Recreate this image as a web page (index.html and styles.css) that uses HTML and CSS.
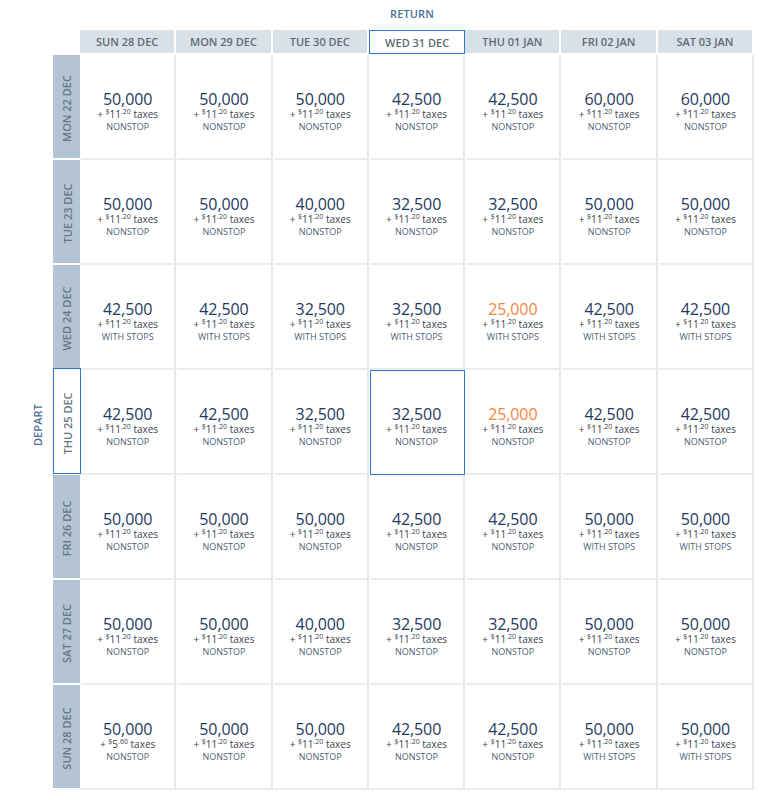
FILE: index.html
```html
<!DOCTYPE html>
<html>
<head>
<meta charset="utf-8">
<link rel="stylesheet" href="styles.css">
</head>
<body>
<div class="page">
  <div class="return-row"><span class="axis-label">RETURN</span></div>
  <div class="layout">
    <div class="depart-col"><span class="axis-label depart">DEPART</span></div>
    <div class="grid">
      <div class="corner"></div>
      <div class="hcell">SUN 28 DEC</div>
      <div class="hcell">MON 29 DEC</div>
      <div class="hcell">TUE 30 DEC</div>
      <div class="hcell sel">WED 31 DEC</div>
      <div class="hcell">THU 01 JAN</div>
      <div class="hcell">FRI 02 JAN</div>
      <div class="hcell">SAT 03 JAN</div>

      <div class="rlabel"><span>MON 22 DEC</span></div>
      <div class="cell"><div class="price">50,000</div><div class="tax">+ <sup>$</sup>11<sup>.20</sup> taxes</div><div class="stop">NONSTOP</div></div>
      <div class="cell"><div class="price">50,000</div><div class="tax">+ <sup>$</sup>11<sup>.20</sup> taxes</div><div class="stop">NONSTOP</div></div>
      <div class="cell"><div class="price">50,000</div><div class="tax">+ <sup>$</sup>11<sup>.20</sup> taxes</div><div class="stop">NONSTOP</div></div>
      <div class="cell"><div class="price">42,500</div><div class="tax">+ <sup>$</sup>11<sup>.20</sup> taxes</div><div class="stop">NONSTOP</div></div>
      <div class="cell"><div class="price">42,500</div><div class="tax">+ <sup>$</sup>11<sup>.20</sup> taxes</div><div class="stop">NONSTOP</div></div>
      <div class="cell"><div class="price">60,000</div><div class="tax">+ <sup>$</sup>11<sup>.20</sup> taxes</div><div class="stop">NONSTOP</div></div>
      <div class="cell"><div class="price">60,000</div><div class="tax">+ <sup>$</sup>11<sup>.20</sup> taxes</div><div class="stop">NONSTOP</div></div>

      <div class="rlabel"><span>TUE 23 DEC</span></div>
      <div class="cell"><div class="price">50,000</div><div class="tax">+ <sup>$</sup>11<sup>.20</sup> taxes</div><div class="stop">NONSTOP</div></div>
      <div class="cell"><div class="price">50,000</div><div class="tax">+ <sup>$</sup>11<sup>.20</sup> taxes</div><div class="stop">NONSTOP</div></div>
      <div class="cell"><div class="price">40,000</div><div class="tax">+ <sup>$</sup>11<sup>.20</sup> taxes</div><div class="stop">NONSTOP</div></div>
      <div class="cell"><div class="price">32,500</div><div class="tax">+ <sup>$</sup>11<sup>.20</sup> taxes</div><div class="stop">NONSTOP</div></div>
      <div class="cell"><div class="price">32,500</div><div class="tax">+ <sup>$</sup>11<sup>.20</sup> taxes</div><div class="stop">NONSTOP</div></div>
      <div class="cell"><div class="price">50,000</div><div class="tax">+ <sup>$</sup>11<sup>.20</sup> taxes</div><div class="stop">NONSTOP</div></div>
      <div class="cell"><div class="price">50,000</div><div class="tax">+ <sup>$</sup>11<sup>.20</sup> taxes</div><div class="stop">NONSTOP</div></div>

      <div class="rlabel"><span>WED 24 DEC</span></div>
      <div class="cell"><div class="price">42,500</div><div class="tax">+ <sup>$</sup>11<sup>.20</sup> taxes</div><div class="stop">WITH STOPS</div></div>
      <div class="cell"><div class="price">42,500</div><div class="tax">+ <sup>$</sup>11<sup>.20</sup> taxes</div><div class="stop">WITH STOPS</div></div>
      <div class="cell"><div class="price">32,500</div><div class="tax">+ <sup>$</sup>11<sup>.20</sup> taxes</div><div class="stop">WITH STOPS</div></div>
      <div class="cell"><div class="price">32,500</div><div class="tax">+ <sup>$</sup>11<sup>.20</sup> taxes</div><div class="stop">WITH STOPS</div></div>
      <div class="cell"><div class="price low">25,000</div><div class="tax">+ <sup>$</sup>11<sup>.20</sup> taxes</div><div class="stop">WITH STOPS</div></div>
      <div class="cell"><div class="price">42,500</div><div class="tax">+ <sup>$</sup>11<sup>.20</sup> taxes</div><div class="stop">WITH STOPS</div></div>
      <div class="cell"><div class="price">42,500</div><div class="tax">+ <sup>$</sup>11<sup>.20</sup> taxes</div><div class="stop">WITH STOPS</div></div>

      <div class="rlabel sel"><span>THU 25 DEC</span></div>
      <div class="cell"><div class="price">42,500</div><div class="tax">+ <sup>$</sup>11<sup>.20</sup> taxes</div><div class="stop">NONSTOP</div></div>
      <div class="cell"><div class="price">42,500</div><div class="tax">+ <sup>$</sup>11<sup>.20</sup> taxes</div><div class="stop">NONSTOP</div></div>
      <div class="cell"><div class="price">32,500</div><div class="tax">+ <sup>$</sup>11<sup>.20</sup> taxes</div><div class="stop">NONSTOP</div></div>
      <div class="cell sel"><div class="price">32,500</div><div class="tax">+ <sup>$</sup>11<sup>.20</sup> taxes</div><div class="stop">NONSTOP</div></div>
      <div class="cell"><div class="price low">25,000</div><div class="tax">+ <sup>$</sup>11<sup>.20</sup> taxes</div><div class="stop">NONSTOP</div></div>
      <div class="cell"><div class="price">42,500</div><div class="tax">+ <sup>$</sup>11<sup>.20</sup> taxes</div><div class="stop">NONSTOP</div></div>
      <div class="cell"><div class="price">42,500</div><div class="tax">+ <sup>$</sup>11<sup>.20</sup> taxes</div><div class="stop">NONSTOP</div></div>

      <div class="rlabel"><span>FRI 26 DEC</span></div>
      <div class="cell"><div class="price">50,000</div><div class="tax">+ <sup>$</sup>11<sup>.20</sup> taxes</div><div class="stop">NONSTOP</div></div>
      <div class="cell"><div class="price">50,000</div><div class="tax">+ <sup>$</sup>11<sup>.20</sup> taxes</div><div class="stop">NONSTOP</div></div>
      <div class="cell"><div class="price">50,000</div><div class="tax">+ <sup>$</sup>11<sup>.20</sup> taxes</div><div class="stop">NONSTOP</div></div>
      <div class="cell"><div class="price">42,500</div><div class="tax">+ <sup>$</sup>11<sup>.20</sup> taxes</div><div class="stop">NONSTOP</div></div>
      <div class="cell"><div class="price">42,500</div><div class="tax">+ <sup>$</sup>11<sup>.20</sup> taxes</div><div class="stop">NONSTOP</div></div>
      <div class="cell"><div class="price">50,000</div><div class="tax">+ <sup>$</sup>11<sup>.20</sup> taxes</div><div class="stop">WITH STOPS</div></div>
      <div class="cell"><div class="price">50,000</div><div class="tax">+ <sup>$</sup>11<sup>.20</sup> taxes</div><div class="stop">WITH STOPS</div></div>

      <div class="rlabel"><span>SAT 27 DEC</span></div>
      <div class="cell"><div class="price">50,000</div><div class="tax">+ <sup>$</sup>11<sup>.20</sup> taxes</div><div class="stop">NONSTOP</div></div>
      <div class="cell"><div class="price">50,000</div><div class="tax">+ <sup>$</sup>11<sup>.20</sup> taxes</div><div class="stop">NONSTOP</div></div>
      <div class="cell"><div class="price">40,000</div><div class="tax">+ <sup>$</sup>11<sup>.20</sup> taxes</div><div class="stop">NONSTOP</div></div>
      <div class="cell"><div class="price">32,500</div><div class="tax">+ <sup>$</sup>11<sup>.20</sup> taxes</div><div class="stop">NONSTOP</div></div>
      <div class="cell"><div class="price">32,500</div><div class="tax">+ <sup>$</sup>11<sup>.20</sup> taxes</div><div class="stop">NONSTOP</div></div>
      <div class="cell"><div class="price">50,000</div><div class="tax">+ <sup>$</sup>11<sup>.20</sup> taxes</div><div class="stop">NONSTOP</div></div>
      <div class="cell"><div class="price">50,000</div><div class="tax">+ <sup>$</sup>11<sup>.20</sup> taxes</div><div class="stop">NONSTOP</div></div>

      <div class="rlabel"><span>SUN 28 DEC</span></div>
      <div class="cell"><div class="price">50,000</div><div class="tax">+ <sup>$</sup>5<sup>.60</sup> taxes</div><div class="stop">NONSTOP</div></div>
      <div class="cell"><div class="price">50,000</div><div class="tax">+ <sup>$</sup>11<sup>.20</sup> taxes</div><div class="stop">NONSTOP</div></div>
      <div class="cell"><div class="price">50,000</div><div class="tax">+ <sup>$</sup>11<sup>.20</sup> taxes</div><div class="stop">NONSTOP</div></div>
      <div class="cell"><div class="price">42,500</div><div class="tax">+ <sup>$</sup>11<sup>.20</sup> taxes</div><div class="stop">NONSTOP</div></div>
      <div class="cell"><div class="price">42,500</div><div class="tax">+ <sup>$</sup>11<sup>.20</sup> taxes</div><div class="stop">NONSTOP</div></div>
      <div class="cell"><div class="price">50,000</div><div class="tax">+ <sup>$</sup>11<sup>.20</sup> taxes</div><div class="stop">WITH STOPS</div></div>
      <div class="cell"><div class="price">50,000</div><div class="tax">+ <sup>$</sup>11<sup>.20</sup> taxes</div><div class="stop">WITH STOPS</div></div>
    </div>
  </div>
</div>
</body>
</html>
```

FILE: styles.css
```css
html, body {
  margin: 0;
  padding: 0;
  background: #ffffff;
}

body {
  font-family: "Open Sans", "Liberation Sans", sans-serif;
}

.page {
  width: 774px;
}

.return-row {
  padding: 6px 0 0 80px;
  height: 24px;
  display: flex;
  justify-content: center;
  align-items: flex-start;
  box-sizing: content-box;
  width: 674px;
}

.axis-label {
  font-size: 11px;
  line-height: 16px;
  font-weight: 600;
  color: #4a6f98;
  letter-spacing: 0.1px;
}

.return-row .axis-label {
  margin-left: -10px;
}

.layout {
  display: flex;
}

.depart-col {
  width: 53px;
  display: flex;
  align-items: center;
  justify-content: center;
  padding-top: 30px;
}

.depart {
  transform: rotate(-90deg);
  white-space: nowrap;
  margin-left: 23px;
}

.grid {
  display: grid;
  grid-template-columns: 27px repeat(7, 96.3px);
  grid-template-rows: 25px repeat(7, 105px);
}

.corner {
  background: transparent;
}

.hcell {
  height: 23px;
  background: #d9e1e8;
  border-right: 2px solid #ffffff;
  font-size: 11px;
  font-weight: 600;
  color: #5f6975;
  display: flex;
  align-items: center;
  justify-content: center;
  line-height: 23px;
  box-sizing: border-box;
  width: 96.3px;
}

.hcell.sel {
  background: #ffffff;
  border: 1px solid #2d79d1;
  height: 24px;
  width: 96.5px;
}

.rlabel {
  background: #b5c4d4;
  height: 103px;
  display: flex;
  align-items: center;
  justify-content: center;
  box-sizing: border-box;
}

.rlabel span {
  transform: rotate(-90deg);
  white-space: nowrap;
  font-size: 11px;
  font-weight: 600;
  color: #687482;
  margin-top: 4px;
}

.rlabel.sel {
  background: #ffffff;
  border: 1px solid #2d79d1;
  height: 106px;
  margin-top: -2px;
  width: 28px;
}

.cell {
  background: #ffffff;
  border-right: 2px solid #e8e8e8;
  border-bottom: 2px solid #ececec;
  box-sizing: border-box;
  display: flex;
  flex-direction: column;
  align-items: center;
  justify-content: center;
  padding-top: 9px;
  margin-left: 1px;
}

.cell.sel {
  border-color: transparent;
  outline: 1px solid #2d79d1;
  outline-offset: -1px;
}

.price {
  font-size: 16px;
  line-height: 18px;
  color: #1f3a60;
  letter-spacing: -0.1px;
}

.price.low {
  color: #f5873a;
}

.tax {
  font-size: 10px;
  line-height: 13px;
  color: #3b4450;
}

.tax sup {
  font-size: 7px;
  vertical-align: baseline;
  position: relative;
  top: -4px;
  line-height: 0;
}

.stop {
  font-size: 9px;
  line-height: 12px;
  color: #4d5f74;
}
```
